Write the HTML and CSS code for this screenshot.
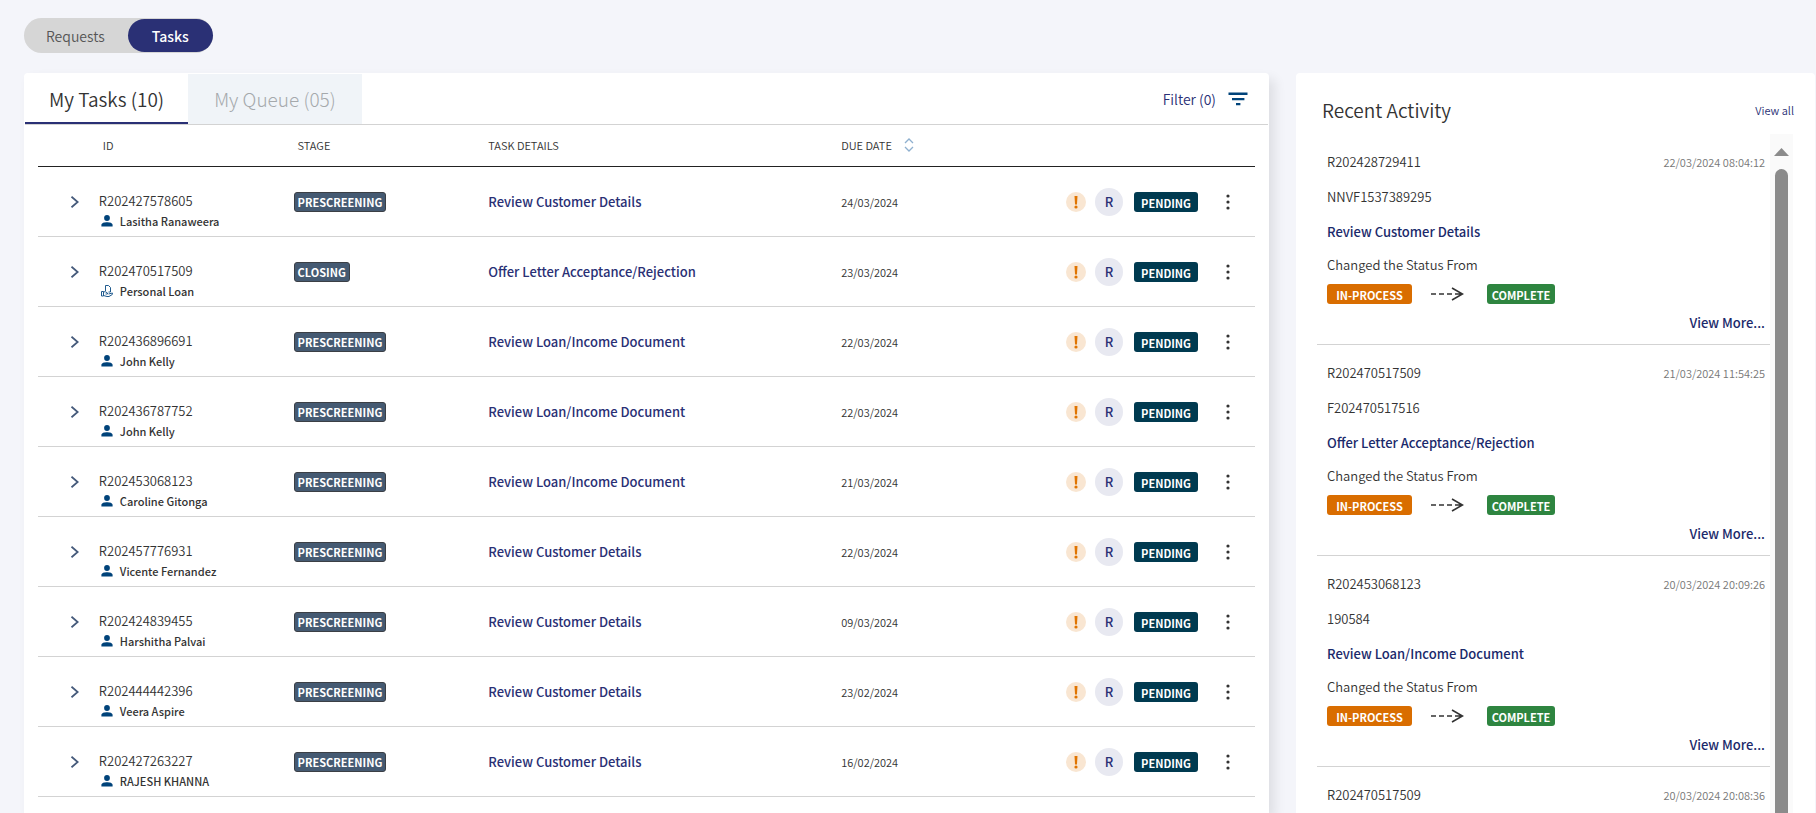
FILE: index.html
```html
<!DOCTYPE html>
<html lang="en">
<head>
<meta charset="utf-8">
<title>Tasks</title>
<link rel="stylesheet" href="styles.css">
</head>
<body>
<svg class="sprite" aria-hidden="true">
  <symbol id="i-chevron" viewBox="0 0 8 12"><path d="M.5.700l6.200 5.300L.5 11.300" fill="none" stroke="#44597a" stroke-width="1.800"/></symbol>
  <symbol id="i-person" viewBox="0 0 12 12"><circle cx="6" cy="3" r="2.900" fill="#00437a"/><path d="M.4 11.600V9.800C.4 7.900 3.400 7.200 6 7.200s5.600.7 5.600 2.600v1.800z" fill="#00437a"/></symbol>
  <symbol id="i-loan" viewBox="0 0 12 12"><path d="M4.500 6V.5h3l2 2v4.500H7.500M.5 6.500h2v4.500h-2zM2.500 6.800h2l2 1.200v1H4.500M7.500 9l4-1c.3.600.2 1.200-.2 1.500L8 11.500H6l-3.500-1" fill="none" stroke="#1f5a8e" stroke-width="1"/></symbol>
  <symbol id="i-alert" viewBox="0 0 20 20"><circle cx="10" cy="10" r="10" fill="#f9e6d2"/><path d="M8.500 4h3l-.5 8.500H9z" fill="#e07400"/><circle cx="10" cy="15" r="1.600" fill="#e07400"/></symbol>
  <symbol id="i-dots" viewBox="0 0 4 16"><g fill="#333"><circle cx="2" cy="2" r="1.600"/><circle cx="2" cy="8" r="1.600"/><circle cx="2" cy="14" r="1.600"/></g></symbol>
  <symbol id="i-arrow" viewBox="0 0 33 14"><path d="M0 7h5M8 7h5M16 7h5M24 7h7M21 1l10.500 6L21 13" fill="none" stroke="#333" stroke-width="1.600"/></symbol>
</svg>

<nav class="switch">
  <button class="switch-item" type="button">Requests</button>
  <button class="switch-item switch-on" type="button">Tasks</button>
</nav>

<main class="board">
  <section class="card tasks">
    <header class="tabs">
      <button class="tab tab-on" type="button">My Tasks (10)</button>
      <button class="tab tab-off" type="button">My Queue (05)</button>
      <button class="filter" type="button">Filter (0)
        <svg width="20" height="14" viewBox="0 0 20 14" fill="#00437a"><path d="M.5.500h19v2.400H.5zM4 6h12.400v2.200H4zM8 11h4.400v2.200H8z"/></svg>
      </button>
    </header>
    <div class="table-wrap">
      <table class="table">
        <colgroup><col class="c-open"><col class="c-id"><col class="c-stage"><col class="c-task"><col class="c-due"><col></colgroup>
        <thead>
          <tr>
            <th></th><th class="inset">ID</th><th class="inset">STAGE</th><th>TASK DETAILS</th>
            <th><span class="sort">DUE DATE <svg width="10" height="14" viewBox="0 0 10 14" fill="none" stroke="#8fb0cf" stroke-width="1.300"><path d="M1 5l4-4 4 4M1 9l4 4 4-4"/></svg></span></th><th></th>
          </tr>
        </thead>
        <tbody>
          <tr>
            <td><button class="open" type="button" aria-label="Expand"><svg width="8" height="12"><use href="#i-chevron"/></svg></button></td>
            <td><div class="ident">R202427578605</div><div class="owner"><svg width="12" height="12"><use href="#i-person"/></svg>Lasitha Ranaweera</div></td>
            <td><span class="badge stage">PRESCREENING</span></td>
            <td><a class="task" href="#">Review Customer Details</a></td>
            <td class="date">24/03/2024</td>
            <td><div class="actions"><svg width="20" height="20"><use href="#i-alert"/></svg><span class="avatar">R</span><span class="badge pending">PENDING</span><button class="more" type="button" aria-label="More"><svg width="4" height="16"><use href="#i-dots"/></svg></button></div></td>
          </tr>
          <tr>
            <td><button class="open" type="button" aria-label="Expand"><svg width="8" height="12"><use href="#i-chevron"/></svg></button></td>
            <td><div class="ident">R202470517509</div><div class="owner"><svg width="12" height="12"><use href="#i-loan"/></svg>Personal Loan</div></td>
            <td><span class="badge stage">CLOSING</span></td>
            <td><a class="task" href="#">Offer Letter Acceptance/Rejection</a></td>
            <td class="date">23/03/2024</td>
            <td><div class="actions"><svg width="20" height="20"><use href="#i-alert"/></svg><span class="avatar">R</span><span class="badge pending">PENDING</span><button class="more" type="button" aria-label="More"><svg width="4" height="16"><use href="#i-dots"/></svg></button></div></td>
          </tr>
          <tr>
            <td><button class="open" type="button" aria-label="Expand"><svg width="8" height="12"><use href="#i-chevron"/></svg></button></td>
            <td><div class="ident">R202436896691</div><div class="owner"><svg width="12" height="12"><use href="#i-person"/></svg>John Kelly</div></td>
            <td><span class="badge stage">PRESCREENING</span></td>
            <td><a class="task" href="#">Review Loan/Income Document</a></td>
            <td class="date">22/03/2024</td>
            <td><div class="actions"><svg width="20" height="20"><use href="#i-alert"/></svg><span class="avatar">R</span><span class="badge pending">PENDING</span><button class="more" type="button" aria-label="More"><svg width="4" height="16"><use href="#i-dots"/></svg></button></div></td>
          </tr>
          <tr>
            <td><button class="open" type="button" aria-label="Expand"><svg width="8" height="12"><use href="#i-chevron"/></svg></button></td>
            <td><div class="ident">R202436787752</div><div class="owner"><svg width="12" height="12"><use href="#i-person"/></svg>John Kelly</div></td>
            <td><span class="badge stage">PRESCREENING</span></td>
            <td><a class="task" href="#">Review Loan/Income Document</a></td>
            <td class="date">22/03/2024</td>
            <td><div class="actions"><svg width="20" height="20"><use href="#i-alert"/></svg><span class="avatar">R</span><span class="badge pending">PENDING</span><button class="more" type="button" aria-label="More"><svg width="4" height="16"><use href="#i-dots"/></svg></button></div></td>
          </tr>
          <tr>
            <td><button class="open" type="button" aria-label="Expand"><svg width="8" height="12"><use href="#i-chevron"/></svg></button></td>
            <td><div class="ident">R202453068123</div><div class="owner"><svg width="12" height="12"><use href="#i-person"/></svg>Caroline Gitonga</div></td>
            <td><span class="badge stage">PRESCREENING</span></td>
            <td><a class="task" href="#">Review Loan/Income Document</a></td>
            <td class="date">21/03/2024</td>
            <td><div class="actions"><svg width="20" height="20"><use href="#i-alert"/></svg><span class="avatar">R</span><span class="badge pending">PENDING</span><button class="more" type="button" aria-label="More"><svg width="4" height="16"><use href="#i-dots"/></svg></button></div></td>
          </tr>
          <tr>
            <td><button class="open" type="button" aria-label="Expand"><svg width="8" height="12"><use href="#i-chevron"/></svg></button></td>
            <td><div class="ident">R202457776931</div><div class="owner"><svg width="12" height="12"><use href="#i-person"/></svg>Vicente Fernandez</div></td>
            <td><span class="badge stage">PRESCREENING</span></td>
            <td><a class="task" href="#">Review Customer Details</a></td>
            <td class="date">22/03/2024</td>
            <td><div class="actions"><svg width="20" height="20"><use href="#i-alert"/></svg><span class="avatar">R</span><span class="badge pending">PENDING</span><button class="more" type="button" aria-label="More"><svg width="4" height="16"><use href="#i-dots"/></svg></button></div></td>
          </tr>
          <tr>
            <td><button class="open" type="button" aria-label="Expand"><svg width="8" height="12"><use href="#i-chevron"/></svg></button></td>
            <td><div class="ident">R202424839455</div><div class="owner"><svg width="12" height="12"><use href="#i-person"/></svg>Harshitha Palvai</div></td>
            <td><span class="badge stage">PRESCREENING</span></td>
            <td><a class="task" href="#">Review Customer Details</a></td>
            <td class="date">09/03/2024</td>
            <td><div class="actions"><svg width="20" height="20"><use href="#i-alert"/></svg><span class="avatar">R</span><span class="badge pending">PENDING</span><button class="more" type="button" aria-label="More"><svg width="4" height="16"><use href="#i-dots"/></svg></button></div></td>
          </tr>
          <tr>
            <td><button class="open" type="button" aria-label="Expand"><svg width="8" height="12"><use href="#i-chevron"/></svg></button></td>
            <td><div class="ident">R202444442396</div><div class="owner"><svg width="12" height="12"><use href="#i-person"/></svg>Veera Aspire</div></td>
            <td><span class="badge stage">PRESCREENING</span></td>
            <td><a class="task" href="#">Review Customer Details</a></td>
            <td class="date">23/02/2024</td>
            <td><div class="actions"><svg width="20" height="20"><use href="#i-alert"/></svg><span class="avatar">R</span><span class="badge pending">PENDING</span><button class="more" type="button" aria-label="More"><svg width="4" height="16"><use href="#i-dots"/></svg></button></div></td>
          </tr>
          <tr>
            <td><button class="open" type="button" aria-label="Expand"><svg width="8" height="12"><use href="#i-chevron"/></svg></button></td>
            <td><div class="ident">R202427263227</div><div class="owner"><svg width="12" height="12"><use href="#i-person"/></svg>RAJESH KHANNA</div></td>
            <td><span class="badge stage">PRESCREENING</span></td>
            <td><a class="task" href="#">Review Customer Details</a></td>
            <td class="date">16/02/2024</td>
            <td><div class="actions"><svg width="20" height="20"><use href="#i-alert"/></svg><span class="avatar">R</span><span class="badge pending">PENDING</span><button class="more" type="button" aria-label="More"><svg width="4" height="16"><use href="#i-dots"/></svg></button></div></td>
          </tr>
        </tbody>
      </table>
    </div>
  </section>

  <aside class="card activity">
    <header class="activity-head">
      <h2 class="title">Recent Activity</h2>
      <a class="view-all" href="#">View all</a>
    </header>
    <div class="feed">
      <div class="feed-list">
        <article class="item">
          <div class="line top"><span>R202428729411</span><time class="time">22/03/2024 08:04:12</time></div>
          <div class="line">NNVF1537389295</div>
          <div class="line"><a class="task dark" href="#">Review Customer Details</a></div>
          <div class="line changed">Changed the Status From</div>
          <div class="flow"><span class="badge process">IN-PROCESS</span><svg width="33" height="14"><use href="#i-arrow"/></svg><span class="badge complete">COMPLETE</span></div>
          <a class="view-more dark" href="#">View More...</a>
        </article>
        <article class="item">
          <div class="line top"><span>R202470517509</span><time class="time">21/03/2024 11:54:25</time></div>
          <div class="line">F202470517516</div>
          <div class="line"><a class="task dark" href="#">Offer Letter Acceptance/Rejection</a></div>
          <div class="line changed">Changed the Status From</div>
          <div class="flow"><span class="badge process">IN-PROCESS</span><svg width="33" height="14"><use href="#i-arrow"/></svg><span class="badge complete">COMPLETE</span></div>
          <a class="view-more dark" href="#">View More...</a>
        </article>
        <article class="item">
          <div class="line top"><span>R202453068123</span><time class="time">20/03/2024 20:09:26</time></div>
          <div class="line">190584</div>
          <div class="line"><a class="task dark" href="#">Review Loan/Income Document</a></div>
          <div class="line changed">Changed the Status From</div>
          <div class="flow"><span class="badge process">IN-PROCESS</span><svg width="33" height="14"><use href="#i-arrow"/></svg><span class="badge complete">COMPLETE</span></div>
          <a class="view-more dark" href="#">View More...</a>
        </article>
        <article class="item last">
          <div class="line top"><span>R202470517509</span><time class="time">20/03/2024 20:08:36</time></div>
        </article>
      </div>
      <div class="track" aria-hidden="true">
        <svg width="15" height="8" viewBox="0 0 15 8"><path d="M7.500 0L15 8H0z" fill="#8b8b8b"/></svg>
        <div class="thumb"></div>
      </div>
    </div>
  </aside>
</main>
</body>
</html>
```

FILE: styles.css
```css
* { box-sizing: border-box; }

body {
  margin: 0;
  height: 100vh;
  padding: 18px 0 0 24px;
  display: flex;
  flex-direction: column;
  gap: 20px;
  overflow: hidden;
  background: #f4f5fa;
  color: #333;
  font-family: "Noto Sans CJK SC", "Noto Sans", sans-serif;
  font-size: 13px;
  line-height: 20px;
}

button {
  margin: 0;
  padding: 0;
  border: 0;
  background: none;
  color: inherit;
  font: inherit;
  cursor: pointer;
}

a { color: #2a3075; text-decoration: none; }
svg { display: block; flex: none; }
.sprite { position: absolute; width: 0; height: 0; }

.switch {
  display: flex;
  align-self: flex-start;
  padding: 1px 0;
  border-radius: 18px;
  background: #d6d6d6;
}
.switch-item {
  height: 33px;
  padding: 0 23px 0 22px;
  border-radius: 17px;
  color: #555;
  font-size: 14px;
  font-weight: 350;
}
.switch-on {
  padding: 0 24px;
  background: #2a3075;
  color: #fff;
  font-weight: 500;
}

.board {
  flex: 1;
  min-height: 0;
  display: grid;
  grid-template-columns: minmax(0, 1245fr) minmax(0, 519fr);
  grid-template-rows: minmax(0, 1fr);
  gap: 27px;
  padding-right: 1px;
}
.card {
  background: #fff;
  border-radius: 4px 4px 0 0;
}
.tasks {
  padding: 1px 1px 0;
  box-shadow: 6px 6px 12px rgba(0, 0, 0, 0.09);
}
.activity {
  display: flex;
  flex-direction: column;
}

.tabs {
  display: flex;
  height: 51px;
  border-bottom: 1px solid #d3d3d3;
}
.tab {
  padding: 2px 24px 0;
  font-size: 19px;
  font-weight: 350;
}
.tab-on { border-bottom: 2px solid #2a3075; }
.tab-off {
  padding: 0 26px;
  background: #f0f4f8;
  color: #a5a9ac;
  font-weight: 300;
}
.filter {
  display: flex;
  align-items: center;
  gap: 12px;
  margin-left: auto;
  padding-right: 20px;
  color: #2a3075;
  font-size: 14px;
  font-weight: 350;
}

.table-wrap { padding: 0 13px; }
.table {
  width: 100%;
  border-collapse: collapse;
  table-layout: fixed;
}
.c-open { width: 5%; }
.c-id, .c-stage { width: 16%; }
.c-task { width: 29%; }
.c-due { width: 12%; }
.table th {
  height: 41px;
  padding: 0;
  border-bottom: 1px solid #222;
  text-align: left;
  font-size: 11px;
  font-weight: 350;
}
.table th.inset { padding-left: 4px; }
.sort { display: inline-flex; align-items: center; gap: 12px; }
.table td {
  height: 70px;
  padding: 2px 0 0;
  border-bottom: 1px solid #d3d3d3;
  vertical-align: middle;
}
.open { display: block; padding: 4px; margin-left: 29px; }
.ident { margin-top: 18px; font-size: 13px; font-weight: 350; }
.owner {
  display: flex;
  align-items: center;
  gap: 7px;
  padding-left: 2px;
  font-size: 11px;
  font-weight: 500;
}
.task { font-size: 13px; font-weight: 500; }
.table .date { font-size: 11px; font-weight: 350; }

.badge {
  display: inline-flex;
  align-items: center;
  justify-content: center;
  height: 20px;
  padding-top: 1px;
  border-radius: 3px;
  color: #fff;
  font-size: 11px;
  font-weight: 700;
}
.stage { padding: 1px 3px 0; border: 1px solid #3b3f45; background: #455a72; }
.pending { padding: 1px 7px 0; margin-left: 2px; background: #003a50; }
.process { width: 85px; background: #d96d00; }
.complete { width: 68px; background: #2e8540; }

.actions {
  display: flex;
  align-items: center;
  justify-content: flex-end;
  gap: 9px;
  padding-right: 17px;
}
.avatar {
  display: flex;
  align-items: center;
  justify-content: center;
  width: 28px;
  height: 28px;
  border-radius: 50%;
  background: #e8e9f1;
  color: #2a3075;
  font-weight: 500;
}
.more { padding: 2px 8px; margin-left: 11px; }

.activity-head {
  display: flex;
  align-items: center;
  justify-content: space-between;
  height: 61px;
  padding: 12px 21px 0 26px;
}
.title { margin: 0; font-size: 19px; font-weight: 350; }
.view-all { font-size: 11px; font-weight: 350; }
.feed {
  flex: 1;
  min-height: 0;
  display: flex;
  padding: 0 22px 0 21px;
}
.feed-list { flex: 1; min-width: 0; font-weight: 350; }
.item {
  display: flex;
  flex-direction: column;
  height: 211px;
  padding: 18px 5px 0 10px;
  border-bottom: 1px solid #d3d3d3;
}
.item.last { border: 0; }
.line { height: 35px; }
.line.top { display: flex; justify-content: space-between; }
.line.changed { height: 29px; margin-top: -2px; }
.time { color: #777; font-size: 11px; }
.dark { color: #1b2a6b; font-weight: 500; }
.flow { display: flex; align-items: center; height: 20px; }
.flow svg { margin: 0 23px 0 19px; }
.view-more { align-self: flex-end; margin-top: 9px; }
.track {
  display: flex;
  flex-direction: column;
  align-items: center;
  gap: 13px;
  width: 23px;
  padding-top: 14px;
  background: #fafafa;
}
.thumb {
  flex: 1;
  width: 13px;
  border-radius: 7px 7px 0 0;
  background: #8b8b8b;
}
```
